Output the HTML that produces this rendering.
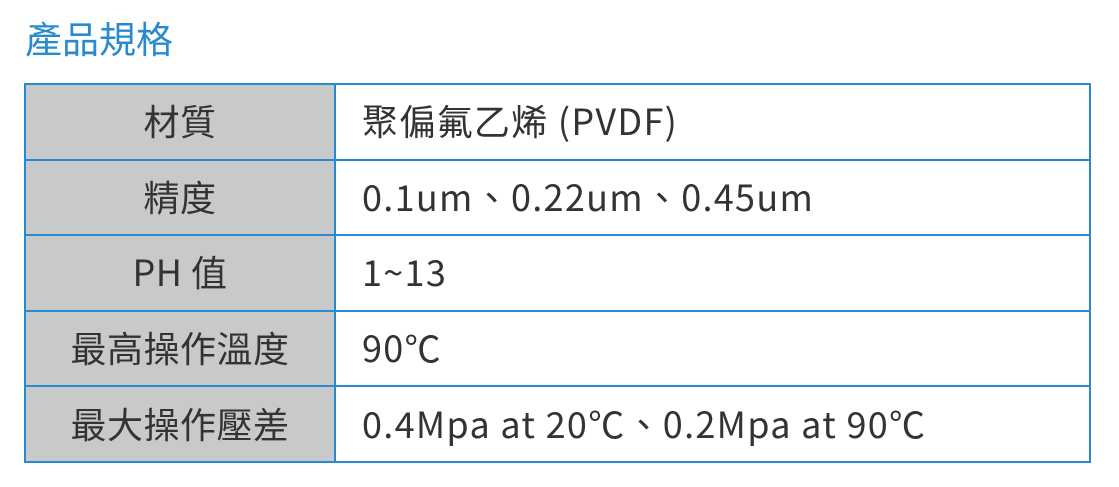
<!DOCTYPE html>
<html><head><meta charset="utf-8"><style>
body{margin:0;background:#fff;width:1119px;height:487px;overflow:hidden;font-family:"Noto Sans CJK TC",sans-serif;}
h1{position:absolute;left:25px;top:12px;margin:0;font-weight:normal;font-size:37px;line-height:50px;color:#2a8ad0;font-family:"Noto Sans CJK TC",sans-serif;}
table{position:absolute;left:24px;top:83px;border-collapse:collapse;width:1067px;}
td{border:2px solid #2a8ad0;height:70.6px;padding:0 0 3px 0;font-size:36px;line-height:40px;color:#333;font-family:"Noto Sans CJK TC",sans-serif;}
td.l{width:308px;background:#c8c9cb;text-align:center;letter-spacing:0.5px;}
td.r{padding-left:26px;letter-spacing:1.3px;}
</style></head><body>
<h1>產品規格</h1>
<table>
<tr><td class="l">材質</td><td class="r">聚偏氟乙烯 (PVDF)</td></tr>
<tr><td class="l">精度</td><td class="r">0.1um、0.22um、0.45um</td></tr>
<tr><td class="l">PH 值</td><td class="r">1~13</td></tr>
<tr><td class="l">最高操作溫度</td><td class="r">90℃</td></tr>
<tr><td class="l">最大操作壓差</td><td class="r">0.4Mpa at 20℃、0.2Mpa at 90℃</td></tr>
</table>
</body></html>
